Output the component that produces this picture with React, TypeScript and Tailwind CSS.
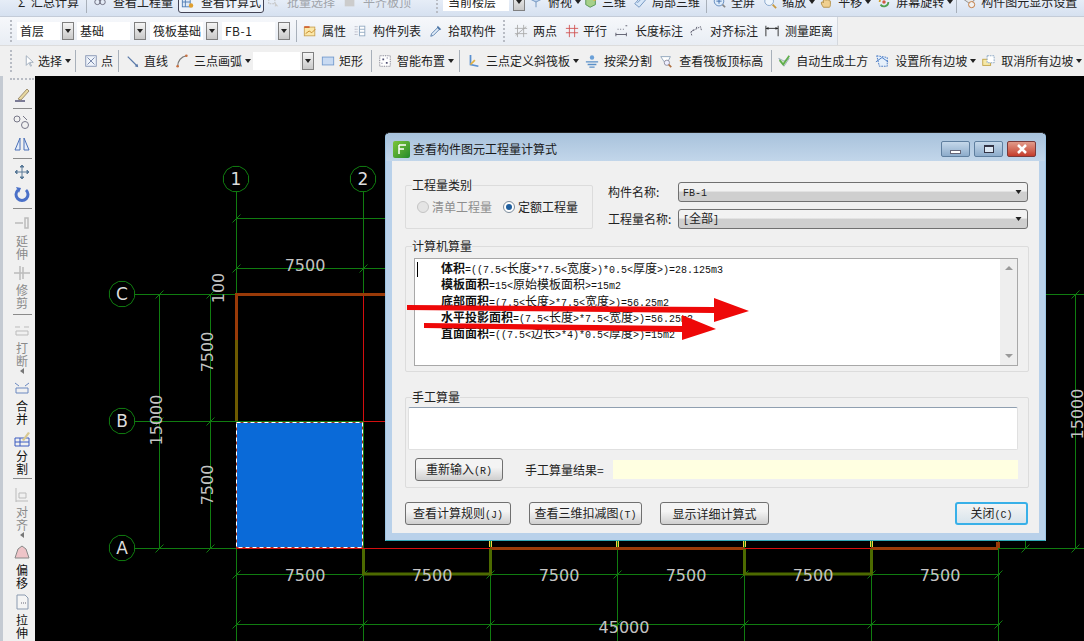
import React from "react";

const cjk = '"Noto Sans CJK SC", "Noto Sans", sans-serif';

type IconName =
  | "table" | "pressed" | "batch" | "flat" | "view" | "cube" | "partial" | "full" | "zoom" | "pan" | "rotate" | "display"
  | "prop" | "list" | "pick" | "two" | "para" | "dimlen" | "dimalign" | "measure"
  | "select" | "point" | "line" | "arc" | "rect" | "smart" | "slope" | "split" | "top" | "auto" | "setslope" | "cancel";

const icons: Record<IconName, React.ReactNode> = {
  table: <><circle cx="5" cy="8" r="3" fill="none" stroke="#667" /><circle cx="11" cy="8" r="3" fill="none" stroke="#667" /></>,
  pressed: <><rect x="1.5" y="4.5" width="9" height="9" fill="#dfeaf7" stroke="#4a78b0" /><path d="M1.5 8h9M5 4.5v9" stroke="#4a78b0" /><circle cx="11.5" cy="12" r="2.5" fill="#e0a030" /></>,
  batch: <><rect x="2" y="3" width="7" height="7" fill="none" stroke="#bbb" strokeDasharray="2 1" /><path d="M9 8l4 5-3-.5L9 14z" fill="#ccc" /></>,
  flat: <><rect x="2" y="5" width="11" height="8" fill="#ccc" /><path d="M2 3h11" stroke="#aaa" strokeWidth="2" /></>,
  view: <><path d="M2 5l6-3 6 3-6 3z" fill="#bcd3ef" stroke="#6a8fbc" /><path d="M8 8v6" stroke="#6a8fbc" /></>,
  cube: <><path d="M2 5l5-3 6 3v6l-6 3-5-3z" fill="#a6d08a" stroke="#4f9050" /><circle cx="12" cy="4" r="2.5" fill="#e8b040" /></>,
  partial: <><path d="M2 10l7-8 5 4-7 8z" fill="#d6e6f8" stroke="#6a8fbc" /><path d="M5 9l5-5" stroke="#6a8fbc" /></>,
  full: <><circle cx="8" cy="7" r="5.5" fill="#dcebfa" stroke="#5a84b8" /><path d="M5 7h6M8 4v6" stroke="#3a68a8" /><path d="M12 11l3 3" stroke="#888" strokeWidth="2" /></>,
  zoom: <><circle cx="7" cy="7" r="5" fill="#eef5fc" stroke="#7fa0c8" /><path d="M11 11l4 4" stroke="#c89a40" strokeWidth="2" /></>,
  pan: <><path d="M5 14c-2-3-3-5-2-6s2 1 2 1V3c0-1 2-1 2 0v3c0-1 2-1 2 0 0-1 2-1 2 0s2 0 2 1v4c0 2-1 3-1 3z" fill="#f0d090" stroke="#b08a40" /></>,
  rotate: <><path d="M3 8a5 5 0 0 1 9-3" fill="none" stroke="#d0a030" strokeWidth="2" /><path d="M13 8a5 5 0 0 1-9 3" fill="none" stroke="#50a050" strokeWidth="2" /><circle cx="8" cy="8" r="2" fill="#d05a40" /></>,
  display: <><path d="M2 5l5-3 7 4-5 4z" fill="#e8e8e8" stroke="#888" /><circle cx="11" cy="11" r="3.5" fill="#f0f0f0" stroke="#c07030" /></>,
  prop: <><rect x="1.5" y="3.5" width="12" height="10" fill="#fbe7a8" stroke="#c9a050" /><path d="M3 11l4-3 3 2 4-4" stroke="#c08020" fill="none" /><path d="M1.5 3.5h6" stroke="#d06030" strokeWidth="2" /></>,
  list: <><path d="M2 3h3M2 6h3M2 9h3M2 12h3" stroke="#99a" strokeDasharray="1 1" /><rect x="7.5" y="2.5" width="6" height="11" fill="#fff" stroke="#90a8c0" /><path d="M7.5 6h6M7.5 9.5h6" stroke="#90a8c0" /></>,
  pick: <><path d="M2 14l1-3 7-7 2 2-7 7z" fill="#e0ecf8" stroke="#5078a8" /><path d="M10 2l4 4-2 1-3-3z" fill="#5078a8" /></>,
  two: <path d="M4 1v14M11 1v14M1 5h14M1 11h14M2 13L14 3" stroke="#aaa" fill="none" />,
  para: <path d="M5 1v14M11 1v14M1 5h14M1 10h14" stroke="#d05050" fill="none" />,
  dimlen: <path d="M1 10v4M13 10v4M1 12h12M3 6h1M6 6h1M9 6h1M12 2h2" stroke="#556" fill="none" />,
  dimalign: <path d="M1 9l11-6M2 13L1 9M13 7l-1-4M3 8l1-2M7 5l1-2" stroke="#556" fill="none" strokeDasharray="2 1" />,
  measure: <><path d="M1 2v12M15 2v12M1 5h14" stroke="#222" fill="none" /><path d="M1 5l3-1.5v3zM15 5l-3-1.5v3z" fill="#222" /></>,
  select: <path d="M6 2v11l3-3 2 4 1-.5-2-4h4z" fill="#fff" stroke="#9aa8b8" />,
  point: <><rect x="2" y="2" width="12" height="12" fill="#eef3fa" stroke="#7f8fb0" /><path d="M4 4l8 8M12 4l-8 8" stroke="#6a7aa0" /></>,
  line: <><path d="M2 3l11 11" stroke="#5878a8" strokeWidth="1.4" /><path d="M14 15l-4-1 3-3z" fill="#5878a8" /></>,
  arc: <><path d="M3 14C3 8 7 3 13 2" stroke="#777" fill="none" strokeWidth="1.4" /><circle cx="3" cy="14" r="1.5" fill="#c87040" /><circle cx="13" cy="2" r="1.5" fill="#c87040" /></>,
  rect: <rect x="1.5" y="3.5" width="13" height="9" fill="#c8daf2" stroke="#7098cc" />,
  smart: <><rect x="2" y="2" width="12" height="12" fill="#fff" stroke="#667" strokeDasharray="1 1" /><path d="M5 5h2v2H5zM9 9h2v2H9zM10 4h1v1h-1zM4 10h1v1H4z" fill="#557" /></>,
  slope: <><path d="M4 1v11l9 2" stroke="#5a90d0" strokeWidth="2" fill="none" /><path d="M4 12l5-5" stroke="#e0b040" strokeWidth="2" /></>,
  split: <><circle cx="8" cy="4" r="2.5" fill="#6aa0d8" /><path d="M1 9h14M3 12h10M5 15h6" stroke="#5a90c8" strokeWidth="1.5" /></>,
  top: <><path d="M2 3h11l-3 6H6z" fill="#fff" stroke="#8aa0b8" /><circle cx="9" cy="10" r="3" fill="#eef" stroke="#889" /><path d="M11 12l3 3" stroke="#b07040" strokeWidth="2" /></>,
  auto: <><path d="M2 5l6 9 6-9-6 3z" fill="#cfe6c0" stroke="#9ab" /><path d="M3 7l4 5 7-10" stroke="#5fae4a" strokeWidth="2" fill="none" /></>,
  setslope: <><path d="M2 2l12 2v10H5z" fill="#e6f0fb" stroke="#3a70c0" strokeDasharray="2 1" /><path d="M1 9l7-5 7 5" stroke="#3a70c0" fill="none" /></>,
  cancel: <><rect x="2" y="6" width="9" height="7" fill="#f6e8a6" stroke="#c0a040" /><rect x="7" y="2" width="8" height="8" fill="#fff" stroke="#80a0c0" strokeDasharray="2 1" /></>,
};

function Ic({ n }: { n: IconName }) {
  return (
    <svg viewBox="0 0 16 16" className="w-[14px] h-[14px] shrink-0">
      {icons[n]}
    </svg>
  );
}

function Tri({ className = "" }: { className?: string }) {
  return (
    <svg viewBox="0 0 6 4" className={"w-[6px] h-[4px] shrink-0 " + className}>
      <path d="M0 0h6L3 4z" fill="#222" />
    </svg>
  );
}

function Tool({ icon, label, m, g, c = "text-[#222]", arrow, am }: { icon: IconName; label: string; m: string; g: string; c?: string; arrow?: boolean; am?: string }) {
  return (
    <div className={"flex items-center shrink-0 " + m}>
      <Ic n={icon} />
      <span className={"text-[12px] leading-[14px] whitespace-nowrap " + g + " " + c}>{label}</span>
      {arrow && <Tri className={am ?? "ml-[3px]"} />}
    </div>
  );
}

function Sep({ m }: { m: string }) {
  return <div className={"w-px h-[22px] bg-[#a8b0ba] shrink-0 " + m} />;
}

function Grip({ m }: { m: string }) {
  return <div className={"w-[3px] h-[22px] shrink-0 border-l-2 border-dotted border-[#b8bcc4] " + m} />;
}

function Combo({ label, m, w, am = "ml-[3px]", mono }: { label: string; m: string; w: string; am?: string; mono?: boolean }) {
  return (
    <>
      <div className={"h-[18px] bg-white pl-[3px] flex items-center text-[12px] text-[#222] shrink-0 overflow-hidden whitespace-nowrap " + m + " " + w + (mono ? " tracking-[0.5px]" : "")}>
        {label}
      </div>
      <div className={"w-[12px] h-[18px] bg-gradient-to-b from-[#f4f4f4] to-[#c8c8c8] border border-[#808080] flex items-center justify-center shrink-0 " + am}>
        <Tri />
      </div>
    </>
  );
}

/* formula text: half-width characters at 6px, full-width at 12px */
function F({ t }: { t: string }) {
  const parts = t.match(/[\u4e00-\u9fff]+|[^\u4e00-\u9fff]+/g) ?? [];
  return (
    <>
      {parts.map((p, i) =>
        /[\u4e00-\u9fff]/.test(p) ? (
          <span key={i} className="text-[12px]">{p}</span>
        ) : (
          <span key={i} className="text-[10px] font-['Liberation_Mono',monospace]">{p}</span>
        )
      )}
    </>
  );
}

function Btn({ t, className }: { t: string; className: string }) {
  return (
    <div className={"h-[23px] rounded-[3px] border border-[#707070] bg-gradient-to-b from-[#f4f4f4] from-40% to-[#cfcfcf] flex items-center justify-center text-[#222] shrink-0 " + className}>
      <span className="whitespace-nowrap"><F t={t} /></span>
    </div>
  );
}

function Select({ t }: { t: string }) {
  return (
    <div className="w-[350px] h-[20px] rounded-[3px] border border-[#707070] bg-gradient-to-b from-[#f2f2f2] from-45% to-[#cfcfcf] to-50% flex items-center pl-[4px] pr-[5px] justify-between">
      <span className="text-[#222] leading-[18px]"><F t={t} /></span>
      <Tri className="!w-[7px]" />
    </div>
  );
}

function Group({ title, className, children }: { title: string; className: string; children?: React.ReactNode }) {
  return (
    <div className={"relative border border-[#dcdcdc] rounded-[2px] shrink-0 " + className}>
      <span className="absolute -top-[9px] left-[6px] bg-[#f0f0f0] text-[12px] leading-[16px] text-[#222] whitespace-nowrap">{title}</span>
      {children}
    </div>
  );
}

function Side({ chars, gray, arrow, m, tm, children }: { chars?: string; gray?: boolean; arrow?: boolean; m: string; tm?: string; children: React.ReactNode }) {
  return (
    <div className={"flex flex-col items-center shrink-0 " + m}>
      <svg viewBox="0 0 18 16" className="w-[18px] h-[16px]">{children}</svg>
      {chars && (
        <div className={"flex flex-col items-center text-[12px] leading-[13px] " + (tm ?? "") + " " + (gray ? "text-[#8a8a8a]" : "text-[#111]")}>
          {chars.split("").map((c, i) => <span key={i} className="h-[13px]">{c}</span>)}
        </div>
      )}
      {arrow && <svg viewBox="0 0 4 6" className="w-[4px] h-[6px] mt-[1px]"><path d="M4 0v6L0 3z" fill="#777" /></svg>}
    </div>
  );
}

function HSep({ m }: { m: string }) {
  return <div className={"w-[19px] h-px bg-[#8a8a8a] shrink-0 " + m} />;
}

const GREEN = "#107c10";
const RED = "#d40f0f";
const BROWN = "#993a08";
const OLIVE = "#4d6a00";
const DIM = "#c4c4c4";

function Bubble({ x, y, t }: { x: number; y: number; t: string }) {
  const pts = Array.from({ length: 12 }, (_, i) => {
    const a = (Math.PI / 6) * i + Math.PI / 12;
    return `${x + 13 * Math.cos(a)},${y + 13 * Math.sin(a)}`;
  }).join(" ");
  return (
    <g>
      <polygon points={pts} fill="none" stroke={GREEN} />
      <text x={x} y={y + 6} textAnchor="middle" fontSize="17" fill="#dcdcdc" fontFamily="DejaVu Sans, sans-serif">{t}</text>
    </g>
  );
}

function Dim({ x, y, t, rot }: { x: number; y: number; t: string; rot?: boolean }) {
  return (
    <text x={x} y={y} textAnchor="middle" dominantBaseline="central" fontSize="16" fill={DIM} fontFamily="DejaVu Sans, sans-serif" transform={rot ? `rotate(-90 ${x} ${y})` : undefined}>{t}</text>
  );
}

function Tick({ x, y }: { x: number; y: number }) {
  return <path d={`M${x - 4} ${y + 4}L${x + 4} ${y - 4}`} stroke={GREEN} />;
}

function Canvas() {
  const xs = [236, 363, 490, 617, 744, 871, 998];
  return (
    <svg viewBox="35 76 1049 565" className="flex-1 h-full bg-black block">
      {/* axis and dimension lines */}
      <g stroke={GREEN} fill="none">
        {xs.map((x) => <path key={x} d={`M${x + 0.5} 192V641`} />)}
        <path d="M135 294.5H400M135 421.5H400M135 548.5H1084" />
        <path d="M236 218.5H400M236 268.5H400M236 574.5H1000M236 624.5H1000" />
        <path d="M159.5 294V548M210.5 294V548M1025.5 500V548M1075.5 294V548M1040 294.5H1084" />
      </g>
      {xs.map((x) => (
        <g key={x}>
          <Tick x={x + 0.5} y={574.5} />
          <Tick x={x + 0.5} y={624.5} />
        </g>
      ))}
      <Tick x={236.5} y={218.5} />
      <Tick x={236.5} y={268.5} />
      <Tick x={363.5} y={268.5} />
      {[294.5, 421.5, 548.5].map((y) => (
        <g key={y}>
          <Tick x={159.5} y={y} />
          <Tick x={210.5} y={y} />
        </g>
      ))}
      <Tick x={1025.5} y={548.5} />
      <Tick x={1075.5} y={548.5} />
      <Tick x={1075.5} y={294.5} />

      {/* slab outlines */}
      <path d="M363.5 294V421.5H400" stroke={RED} fill="none" />
      <path d="M236 294.5H400" stroke={BROWN} strokeWidth="3" />
      <path d="M236.5 293V360" stroke={BROWN} strokeWidth="3" />
      <path d="M236.5 340V421" stroke="#6d5a00" strokeWidth="3" />
      <path d="M236 548.5H490M744 548.5H871" stroke={RED} />
      <path d="M490 548.5H744M871 548.5H998" stroke={BROWN} strokeWidth="3" />
      <path d="M363.5 549V574H490.5V549M744.5 549V574H871.5V549" stroke={OLIVE} strokeWidth="3" fill="none" />
      <rect x="996" y="542" width="4" height="6" fill={BROWN} />
      {[490, 617, 744, 871].map((x) => (
        <path key={x} d={`M${x - 0.5} 541v6M${x + 1.5} 541v6`} stroke="#f5d040" />
      ))}

      {/* selected slab */}
      <rect x="236" y="422" width="127" height="126" fill="#0a6ad8" />
      <rect x="236.5" y="422.5" width="126" height="125" fill="none" stroke="#a03020" />
      <rect x="236.5" y="422.5" width="126" height="125" fill="none" stroke="#ffffff" strokeDasharray="4 3" />

      <Bubble x={236} y={179} t="1" />
      <Bubble x={363} y={179} t="2" />
      <Bubble x={122} y={294} t="C" />
      <Bubble x={122} y={421} t="B" />
      <Bubble x={122} y={548} t="A" />

      <Dim x={305} y={265} t="7500" />
      <Dim x={218} y={288} t="100" rot />
      <Dim x={207} y={352} t="7500" rot />
      <Dim x={207} y={485} t="7500" rot />
      <Dim x={156} y={420} t="15000" rot />
      <Dim x={1077} y={414} t="15000" rot />
      {[305, 432, 559, 686, 813, 940].map((x) => <Dim key={x} x={x} y={575} t="7500" />)}
      <Dim x={624} y={627} t="45000" />
    </svg>
  );
}

function Dialog() {
  return (
    <div className="absolute left-[385px] top-[132px] w-[661px] h-[409px] rounded-t-[5px] bg-[#b9d1ea] border-t border-t-[#222] border-b border-b-[#2fa8b8] border-x border-x-[#9cc4e4] flex flex-col">
      {/* title bar */}
      <div className="h-[28px] shrink-0 rounded-t-[5px] bg-gradient-to-b from-[#a8c2dc] to-[#c2d6ea] flex items-center pl-[7px] pr-[9px] pt-[4px]">
        <div className="w-[17px] h-[17px] bg-gradient-to-br from-[#7cc63a] to-[#1f8a2a] rounded-[2px] flex items-center justify-center">
          <svg viewBox="0 0 12 12" className="w-[12px] h-[12px]"><path d="M3 2h7M3 2v9M3 6h5" stroke="#fff" strokeWidth="1.5" fill="none" /></svg>
        </div>
        <span className="ml-[3px] text-[12px] text-[#1a1a1a] whitespace-nowrap">查看构件图元工程量计算式</span>
        <div className="ml-auto flex gap-[4px]">
          <div className="w-[29px] h-[16px] rounded-[2px] border border-[#5f7f9f] bg-gradient-to-b from-[#c5d8ea] to-[#8daccb] flex items-end justify-center pb-[2px]">
            <div className="w-[11px] h-[4px] bg-white border border-[#667]" />
          </div>
          <div className="w-[29px] h-[16px] rounded-[2px] border border-[#5f7f9f] bg-gradient-to-b from-[#c5d8ea] to-[#8daccb] flex items-center justify-center">
            <div className="w-[10px] h-[8px] bg-[#dce8f4] border border-[#334] border-t-2" />
          </div>
          <div className="w-[29px] h-[16px] rounded-[2px] border border-[#7a3a3a] bg-gradient-to-b from-[#e09a8a] to-[#c43a2a] flex items-center justify-center text-white">
            <svg viewBox="0 0 12 10" className="w-[12px] h-[10px]"><path d="M2 1l8 8M10 1l-8 8" stroke="#fff" strokeWidth="2.5" /></svg>
          </div>
        </div>
      </div>

      {/* client area */}
      <div className="mx-[6px] w-[647px] h-[372px] bg-[#f0f0f0] flex flex-col pl-[13px] shrink-0 relative text-[12px]">
        <div className="flex mt-[21px] h-[47px] shrink-0">
          <Group title="工程量类别" className="w-[188px] h-[44px] mt-[3px] flex items-center">
            <span className="ml-[11px] w-[12px] h-[12px] rounded-full border border-[#c4c4c4] bg-[#e4e4e4] shrink-0" />
            <span className="ml-[3px] text-[#8e8e8e] whitespace-nowrap">清单工程量</span>
            <span className="ml-[11px] w-[12px] h-[12px] rounded-full border border-[#7a8a9a] bg-white flex items-center justify-center shrink-0">
              <span className="w-[6px] h-[6px] rounded-full bg-[#1f5f9f]" />
            </span>
            <span className="ml-[3px] text-[#222] whitespace-nowrap">定额工程量</span>
          </Group>
          <div className="ml-[15px] flex flex-col gap-[7px]">
            <div className="flex items-center">
              <span className="w-[70px] text-[#222] whitespace-nowrap">构件名称:</span>
              <Select t="FB-1" />
            </div>
            <div className="flex items-center">
              <span className="w-[70px] text-[#222] whitespace-nowrap">工程量名称:</span>
              <Select t="[全部]" />
            </div>
          </div>
        </div>

        <Group title="计算机算量" className="w-[624px] h-[126px] mt-[17px] pl-[8px] pt-[11px]">
          <div className="w-[604px] h-[108px] bg-white border border-[#a8a8a8] flex relative">
            <div className="absolute left-[2px] top-[3px] w-px h-[15px] bg-black" />
            <div className="flex-1 pl-[26px] pt-[1px] text-[#111] whitespace-nowrap">
              <div className="h-[16.25px] leading-[16px]"><b className="font-bold text-[12px]">体积</b><F t="=((7.5<长度>*7.5<宽度>)*0.5<厚度>)=28.125m3" /></div>
              <div className="h-[16.25px] leading-[16px]"><b className="font-bold text-[12px]">模板面积</b><F t="=15<原始模板面积>=15m2" /></div>
              <div className="h-[16.25px] leading-[16px]"><b className="font-bold text-[12px]">底部面积</b><F t="=(7.5<长度>*7.5<宽度>)=56.25m2" /></div>
              <div className="h-[16.25px] leading-[16px]"><b className="font-bold text-[12px]">水平投影面积</b><F t="=(7.5<长度>*7.5<宽度>)=56.25m2" /></div>
              <div className="h-[16.25px] leading-[16px]"><b className="font-bold text-[12px]">直面面积</b><F t="=((7.5<边长>*4)*0.5<厚度>)=15m2" /></div>
            </div>
            <div className="w-[17px] bg-[#eeeeee] flex flex-col items-center justify-between py-[7px]">
              <svg viewBox="0 0 8 4" className="w-[8px] h-[4px]"><path d="M0 4h8L4 0z" fill="#9a9a9a" /></svg>
              <svg viewBox="0 0 8 4" className="w-[8px] h-[4px]"><path d="M0 0h8L4 4z" fill="#9a9a9a" /></svg>
            </div>
          </div>
        </Group>

        <Group title="手工算量" className="w-[624px] h-[91px] mt-[25px] pl-[2px] pt-[9px]">
          <div className="w-[610px] h-[43px] bg-white border-t border-t-[#8f9fb0] border-x border-x-[#e0e0e0] border-b border-b-[#e0e0e0] rounded-[2px]" />
          <div className="flex items-center mt-[8px] ml-[7px]">
            <Btn t="重新输入(R)" className="w-[88px]" />
            <span className="ml-[22px] text-[#222] whitespace-nowrap">手工算量结果=</span>
            <div className="ml-[9px] w-[405px] h-[19px] bg-[#ffffe1]" />
          </div>
        </Group>

        <div className="flex items-center mt-[14px]">
          <Btn t="查看计算规则(J)" className="w-[106px]" />
          <Btn t="查看三维扣减图(T)" className="w-[113px] ml-[18px]" />
          <Btn t="显示详细计算式" className="w-[109px] ml-[18px]" />
          <div className="w-[73px] h-[23px] ml-[186px] rounded-[3px] border-2 border-[#38b0e8] bg-gradient-to-b from-[#f4f4f4] to-[#d8e4ec] flex items-center justify-center text-[#222] shrink-0">
            <span><F t="关闭(C)" /></span>
          </div>
        </div>
      </div>

      {/* hand-drawn annotation arrows */}
      <svg viewBox="400 290 360 55" className="absolute left-[14px] top-[157px] w-[360px] h-[55px]">
        <path d="M407 305L714 307V298L749 311L714 322V313L407 310Z" fill="#ee0808" />
        <path d="M424 323L682 326V315L716 329L682 340V332L424 328Z" fill="#ee0808" />
      </svg>
    </div>
  );
}

export default function App() {
  return (
    <div className="relative w-[1084px] h-[641px] overflow-hidden flex flex-col bg-[#f0f0f0] font-['Noto_Sans_CJK_SC','Noto_Sans',sans-serif]" style={{ fontFamily: cjk }}>
      {/* row 1 (scrolled off the top) */}
      <div className="h-[17px] shrink-0 overflow-hidden bg-gradient-to-b from-[#e6edf7] to-[#d6e1f0] border-b border-[#c4ccd8]">
        <div className="flex items-center h-[14px] -mt-[5px]">
          <span className="ml-[18px] w-[8px] text-[12px] text-[#222]">Σ</span>
          <span className="ml-[5px] text-[12px] text-[#222] whitespace-nowrap">汇总计算</span>
          <Sep m="ml-[7px]" />
          <Tool icon="table" label="查看工程量" m="ml-[6px]" g="ml-[6px]" />
          <div className="ml-[5px] w-[86px] h-[22px] rounded-[3px] border border-[#445] bg-[#eef3fa] flex items-center pl-[2px] shrink-0">
            <Ic n="pressed" />
            <span className="ml-[6px] text-[12px] text-[#222] whitespace-nowrap">查看计算式</span>
          </div>
          <Tool icon="batch" label="批量选择" m="ml-[3px]" g="ml-[6px]" c="text-[#a0a4aa]" />
          <Tool icon="flat" label="平齐板顶" m="ml-[8px]" g="ml-[6px]" c="text-[#a0a4aa]" />
          <Grip m="ml-[25px]" />
          <div className="ml-[4px] w-[66px] h-[18px] bg-white pl-[5px] flex items-center text-[12px] text-[#222] whitespace-nowrap shrink-0">当前楼层</div>
          <div className="ml-[4px] w-[12px] h-[18px] bg-gradient-to-b from-[#f4f4f4] to-[#c8c8c8] border border-[#808080] flex items-center justify-center shrink-0"><Tri /></div>
          <Tool icon="view" label="俯视" m="ml-[4px]" g="ml-[5px]" arrow />
          <Tool icon="cube" label="三维" m="ml-[3px]" g="ml-[4px]" />
          <Tool icon="partial" label="局部三维" m="ml-[7px]" g="ml-[5px]" />
          <Sep m="ml-[6px]" />
          <Tool icon="full" label="全屏" m="ml-[5px]" g="ml-[5px]" />
          <Tool icon="zoom" label="缩放" m="ml-[8px]" g="ml-[5px]" arrow />
          <Tool icon="pan" label="平移" m="ml-[4px]" g="ml-[5px]" arrow />
          <Tool icon="rotate" label="屏幕旋转" m="ml-[6px]" g="ml-[5px]" arrow />
          <Sep m="ml-[3px]" />
          <Tool icon="display" label="构件图元显示设置" m="ml-[5px]" g="ml-[5px]" />
        </div>
      </div>

      {/* row 2 */}
      <div className="h-[29px] shrink-0 bg-[#f0f0f0] border-b border-[#dcdcdc]">
        <div className="w-[838px] h-full bg-gradient-to-b from-[#f6f8fb] to-[#e8edf4] border-r border-[#d4d8de] flex items-center">
          <Grip m="ml-[10px]" />
          <Combo label="首层" m="ml-[4px]" w="w-[43px]" am="ml-[2px]" />
          <Combo label="基础" m="ml-[3px]" w="w-[53px]" am="ml-[4px]" />
          <Combo label="筏板基础" m="ml-[4px]" w="w-[53px]" am="ml-[3px]" />
          <Combo label="FB-1" m="ml-[4px]" w="w-[53px]" mono />
          <Sep m="ml-[6px]" />
          <Tool icon="prop" label="属性" m="ml-[6px]" g="ml-[5px]" />
          <Tool icon="list" label="构件列表" m="ml-[7px]" g="ml-[6px]" />
          <Tool icon="pick" label="拾取构件" m="ml-[8px]" g="ml-[5px]" />
          <Grip m="ml-[7px]" />
          <Tool icon="two" label="两点" m="ml-[8px]" g="ml-[5px]" />
          <Tool icon="para" label="平行" m="ml-[8px]" g="ml-[4px]" />
          <Tool icon="dimlen" label="长度标注" m="ml-[8px]" g="ml-[6px]" />
          <Tool icon="dimalign" label="对齐标注" m="ml-[7px]" g="ml-[6px]" />
          <Tool icon="measure" label="测量距离" m="ml-[7px]" g="ml-[6px]" />
        </div>
      </div>

      {/* row 3 */}
      <div className="h-[30px] shrink-0 bg-[#f0f0f0] flex items-center">
        <Grip m="ml-[10px]" />
        <Tool icon="select" label="选择" m="ml-[8px]" g="ml-[3px]" arrow />
        <Sep m="ml-[4px]" />
        <Tool icon="point" label="点" m="ml-[8px]" g="ml-[3px]" />
        <Sep m="ml-[5px]" />
        <Tool icon="line" label="直线" m="ml-[7px]" g="ml-[4px]" />
        <Tool icon="arc" label="三点画弧" m="ml-[7px]" g="ml-[5px]" arrow />
        <Combo label="" m="ml-[2px]" w="w-[47px]" am="ml-[2px]" />
        <Tool icon="rect" label="矩形" m="ml-[7px]" g="ml-[4px]" />
        <Sep m="ml-[8px]" />
        <Tool icon="smart" label="智能布置" m="ml-[6px]" g="ml-[5px]" arrow />
        <Sep m="ml-[5px]" />
        <Tool icon="slope" label="三点定义斜筏板" m="ml-[7px]" g="ml-[5px]" arrow />
        <Tool icon="split" label="按梁分割" m="ml-[6px]" g="ml-[5px]" />
        <Tool icon="top" label="查看筏板顶标高" m="ml-[7px]" g="ml-[6px]" />
        <Sep m="ml-[8px]" />
        <Tool icon="auto" label="自动生成土方" m="ml-[5px]" g="ml-[5px]" />
        <Tool icon="setslope" label="设置所有边坡" m="ml-[7px]" g="ml-[6px]" arrow />
        <Tool icon="cancel" label="取消所有边坡" m="ml-[5px]" g="ml-[6px]" arrow />
      </div>

      {/* body */}
      <div className="flex-1 flex min-h-0">
        <div className="w-[35px] shrink-0 bg-[#f0f0f0] border-l-[3px] border-l-[#c4cad2] flex flex-col items-center pl-[6px] overflow-hidden">
          <div className="w-[24px] h-[2px] mt-[2px] border-t-2 border-dotted border-[#b8bcc4] shrink-0" />
          <Side m="mt-[7px]">
            <path d="M2 14h10" stroke="#557" strokeWidth="1.5" /><path d="M5 12l9-10 2 2-8 9z" fill="#e8d8a0" stroke="#a09070" />
          </Side>
          <HSep m="mt-[5px]" />
          <Side m="mt-[5px]">
            <circle cx="4" cy="5" r="3" fill="none" stroke="#778" /><circle cx="12" cy="11" r="3.5" fill="none" stroke="#778" /><path d="M10 2l4 4" stroke="#778" />
          </Side>
          <Side m="mt-[6px]">
            <path d="M7 2v12H2zM11 2v12h5z" fill="#e6eefa" stroke="#4a70b8" />
          </Side>
          <HSep m="mt-[6px]" />
          <Side m="mt-[5px]">
            <path d="M9 1v14M2 8h14M9 1l-2 2h4zM9 15l-2-2h4zM2 8l2-2v4zM16 8l-2-2v4z" stroke="#5a7a98" fill="#5a7a98" />
          </Side>
          <Side m="mt-[6px]">
            <path d="M5 4a6 6 0 1 0 8 0" fill="none" stroke="#4a70c8" strokeWidth="3" /><path d="M3 1l5 1-2 5z" fill="#4a70c8" />
          </Side>
          <HSep m="mt-[6px]" />
          <Side chars="延伸" gray m="mt-[5px]" tm="mt-[4px]">
            <path d="M2 9h8M12 4h3v10h-3z" stroke="#bbb" fill="none" strokeWidth="1.5" />
          </Side>
          <Side chars="修剪" gray m="mt-[5px]" tm="mt-[2px]">
            <path d="M1 8h16M7 1v14M10 2v12" stroke="#bbb" fill="none" strokeWidth="1.5" />
          </Side>
          <HSep m="mt-[5px]" />
          <Side chars="打断" gray arrow m="mt-[7px]" tm="mt-[3px]">
            <path d="M2 5h5M11 5h5M3 9h12v4H3z" stroke="#bbb" fill="none" />
          </Side>
          <Side chars="合并" m="mt-[6px]" tm="mt-[3px]">
            <path d="M2 3l4 3M16 3l-4 3M3 8h12v5H3z" stroke="#6a88c0" fill="none" />
          </Side>
          <Side chars="分割" m="mt-[6px]" tm="mt-[2px]">
            <path d="M2 7h14v8H2zM2 11h14M7 7v8" stroke="#3a5ac0" fill="none" /><path d="M9 9l6-8 2 1-6 8z" fill="#d8c890" />
          </Side>
          <HSep m="mt-[3px]" />
          <Side chars="对齐" gray arrow m="mt-[8px]" tm="mt-[2px]">
            <path d="M3 1v14M3 14h12M6 6h7v5H6z" stroke="#bbb" fill="none" />
          </Side>
          <Side chars="偏移" m="mt-[6px]" tm="mt-[3px]">
            <path d="M2 14l3-9 4-3 4 3 3 9z" fill="#eec4c8" stroke="#888" />
          </Side>
          <Side chars="拉伸" m="mt-[5px]" tm="mt-[3px]">
            <path d="M4 1h8l3 3v11H4z" fill="#f4f4f4" stroke="#8a9ab0" /><path d="M8 9h6" stroke="#667" strokeDasharray="1 1" />
          </Side>
        </div>
        <Canvas />
      </div>

      <Dialog />
    </div>
  );
}
